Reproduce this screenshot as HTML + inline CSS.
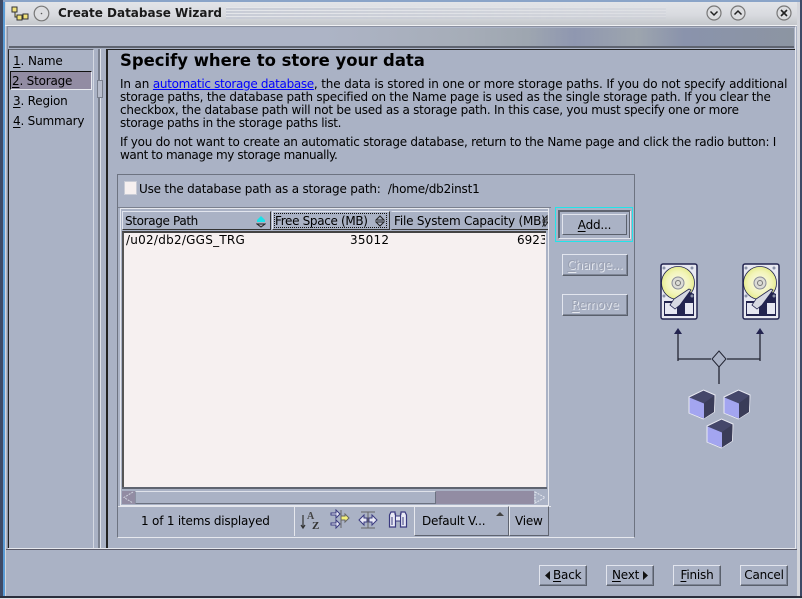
<!DOCTYPE html>
<html><head><meta charset="utf-8"><style>
html,body{margin:0;padding:0}
body{width:802px;height:599px;overflow:hidden;position:relative;background:#aab2c5;font:12px/13px "DejaVu Sans",sans-serif;color:#000;letter-spacing:-.2px}
.a{position:absolute;white-space:nowrap}
.r{position:absolute;box-sizing:border-box}
.btn{position:absolute;box-sizing:border-box;height:22px;border:1px solid;border-color:#e2e5ee #5a606c #5a606c #e2e5ee;box-shadow:inset -1px -1px 0 #7f8696;text-align:center;line-height:20px;font-size:12px}
.dis{color:#9aa1b3;text-shadow:1px 1px 0 #e4e7ee}
u{text-underline-offset:2px}
</style></head><body>

<!-- title bar -->
<div class="r" style="left:0;top:0;width:802px;height:25px;background:linear-gradient(#e4e6ea,#d8dadf 60%,#c4c7cc)"></div>
<div class="r" style="left:0;top:0;width:802px;height:2px;background:#8aa4c8"></div>
<div class="r" style="left:0;top:0;width:3px;height:599px;background:#3e4a66"></div>
<div class="r" style="left:3px;top:2px;width:2px;height:595px;background:#5a9bd5"></div>
<div class="r" style="left:5px;top:2px;width:1px;height:595px;background:#d4d6dc"></div>
<div class="r" style="left:797px;top:2px;width:3px;height:595px;background:#d4d6dc"></div>
<div class="r" style="left:800px;top:0;width:2px;height:599px;background:#3e4a66"></div>
<div class="r" style="left:5px;top:25px;width:792px;height:1px;background:#f0f1f4"></div>
<svg class="r" style="left:10px;top:4px" width="20" height="18" viewBox="0 0 20 18"><path d="M2 3h5v5h-5zM7 11h5v5h-5zM13 10h5v5h-5zM5 8v5h2" fill="#f1e27a" stroke="#333"/></svg>
<svg class="r" style="left:33px;top:5px" width="17" height="17"><circle cx="8.5" cy="8.5" r="7.3" fill="#dcdde0" stroke="#777" stroke-width="1.2"/><circle cx="8.5" cy="8.5" r=".8" fill="#555"/></svg>
<div class="a" style="left:58px;top:5px;font:bold 12px/16px 'DejaVu Sans',sans-serif;color:#1a1a1a;letter-spacing:0">Create Database Wizard</div>
<div class="r" style="left:226px;top:7px;width:440px;height:12px;background:repeating-linear-gradient(#e4e6ea 0 1px,#c8ccd6 1px 3px);-webkit-mask-image:linear-gradient(90deg,#000,rgba(0,0,0,.3))"></div>
<svg class="r" style="left:705px;top:4px" width="50" height="18"><g fill="#dcdde0" stroke="#777" stroke-width="1.2"><circle cx="9" cy="9" r="7"/><circle cx="33" cy="9" r="7"/></g><path d="M5.5 7.5L9 11l3.500-3.500M29.500 10.500L33 7l3.500 3.500" fill="none" stroke="#222" stroke-width="1.5"/></svg>
<svg class="r" style="left:775px;top:4px" width="18" height="18"><circle cx="9" cy="9" r="7" fill="#dcdde0" stroke="#777" stroke-width="1.2"/><path d="M6 6l6 6M12 6l-6 6" stroke="#222" stroke-width="1.6"/></svg>

<!-- banner -->
<div class="r" style="left:7px;top:26px;width:789px;height:523px;border:1px solid #8a90a0;border-right-color:#e6e8ee;border-bottom-color:#e6e8ee"></div>
<div class="r" style="left:6px;top:549px;width:791px;height:1px;background:#5a5a68"></div>
<div class="r" style="left:9px;top:28px;width:785px;height:19px;background:linear-gradient(90deg,#adb4c6 0,#adb4c6 40%,#a6adb8 58%,#9ea6b0 66%,#8f97b0 72%,#9da5ae 80%,#8a93ac 86%,#8c95a2 100%)"></div>
<div class="r" style="left:9px;top:46px;width:785px;height:2px;background:#5f6470"></div>

<!-- nav -->
<div class="r" style="left:8px;top:49px;width:86px;height:499px;border-left:1px solid #222;border-top:1px solid #5f6470;border-right:1px solid #d5d9e3"></div>
<div class="a" style="left:13px;top:54px;line-height:14px"><u>1</u>.</div><div class="a" style="left:28px;top:54px;line-height:14px">Name</div>
<div class="r" style="left:10px;top:71px;width:82px;height:19px;background:#928ca3;border:1px solid;border-color:#111 #e8eaf0 #e8eaf0 #111"></div>
<div class="a" style="left:12px;top:74px;line-height:14px"><u>2</u>. Storage</div>
<div class="a" style="left:13px;top:94px;line-height:14px"><u>3</u>. Region</div>
<div class="a" style="left:13px;top:114px;line-height:14px"><u>4</u>. Summary</div>

<!-- splitter -->
<div class="r" style="left:98px;top:49px;width:3px;height:499px;background:#7a808e;border-right:1px solid #dfe2ea"></div>
<div class="r" style="left:97px;top:80px;width:6px;height:18px;background:#b8bdcc;border:1px solid #7a808e"></div>
<div class="r" style="left:106px;top:49px;width:2px;height:499px;background:#222"></div>
<div class="r" style="left:106px;top:49px;width:689px;height:1px;background:#222"></div>

<!-- content text -->
<div class="a" style="left:120px;top:50px;font:bold 16.45px/22px 'DejaVu Sans',sans-serif;letter-spacing:0">Specify where to store your data</div>
<div class="a" style="left:120px;top:78px;letter-spacing:-.14px">In an <span style="color:#00f;text-decoration:underline;letter-spacing:-.33px">automatic storage database</span>, the data is stored in one or more storage paths. If you do not specify additional</div>
<div class="a" style="left:120px;top:91px;letter-spacing:-.25px">storage paths, the database path specified on the Name page is used as the single storage path. If you clear the</div>
<div class="a" style="left:120px;top:104px;letter-spacing:-.25px">checkbox, the database path will not be used as a storage path. In this case, you must specify one or more</div>
<div class="a" style="left:120px;top:117px;letter-spacing:-.3px">storage paths in the storage paths list.</div>
<div class="a" style="left:120px;top:136px;letter-spacing:-.26px">If you do not want to create an automatic storage database, return to the Name page and click the radio button: I</div>
<div class="a" style="left:120px;top:149px;letter-spacing:-.4px">want to manage my storage manually.</div>

<!-- group -->
<div class="r" style="left:117px;top:174px;width:518px;height:364px;border:1px solid;border-color:#6d7381 #6d7381 #e6e8ee #6d7381"></div>
<div class="r" style="left:124px;top:181px;width:13px;height:14px;background:#f6f0f0;border:1px solid #c9ccd6"></div>
<div class="a" style="left:139px;top:183px">Use the database path as a storage path: &nbsp;/home/db2inst1</div>

<!-- table -->
<div class="r" style="left:118px;top:207px;width:433px;height:1px;background:#7a808e"></div>
<div class="r" style="left:120px;top:208px;width:429px;height:298px;border:1px solid #e6e8ee"></div>
<div class="r" style="left:121px;top:209px;width:427px;height:23px;background:#aab2c5"></div>
<div class="r" style="left:122px;top:211px;width:149px;height:19px;border:1px solid;border-color:#e2e5ee #333 #333 #e2e5ee"></div>
<div class="a" style="left:125px;top:215px;letter-spacing:-.35px">Storage Path</div>
<svg class="r" style="left:256px;top:215px" width="10" height="13"><path d="M1 5L5 1l4 4z" fill="#1de0e8"/><rect x="1" y="5" width="8" height="2" fill="#1de0e8"/><path d="M1 9h8l-4 3z" fill="none" stroke="#222"/></svg>
<div class="r" style="left:272px;top:211px;width:118px;height:19px;border:1px solid;border-color:#e2e5ee #333 #333 #e2e5ee"></div>
<div class="r" style="left:274px;top:213px;width:113px;height:15px;border:1px dotted #111"></div>
<div class="a" style="left:275px;top:215px;letter-spacing:-.33px">Free Space (MB)</div>
<svg class="r" style="left:375px;top:215px" width="10" height="12"><path d="M1 5l4-4 4 4zM1 7h8l-4 4z" fill="none" stroke="#222"/></svg>
<div class="r" style="left:391px;top:211px;width:157px;height:19px;border:1px solid;border-color:#e2e5ee #333 #333 transparent;border-right:0"></div>
<div class="a" style="left:394px;top:215px">File System Capacity (MB)</div>
<svg class="r" style="left:542px;top:215px" width="6" height="12"><path d="M1 5l4-4v4zM1 7h5l-3 4z" fill="none" stroke="#222"/></svg>

<div class="r" style="left:122px;top:231px;width:424px;height:256px;background:#f6f0f0;border-top:2px solid #444;border-left:2px solid #555"></div>
<div class="a" style="left:126px;top:234px;letter-spacing:.25px">/u02/db2/GGS_TRG</div>
<div class="a" style="left:350px;top:234px;letter-spacing:.2px">35012</div>
<div class="a" style="left:517px;top:234px;width:28px;overflow:hidden;letter-spacing:0">6923</div>

<!-- scrollbar -->
<div class="r" style="left:122px;top:487px;width:425px;height:2px;background:#5f6470"></div>
<div class="r" style="left:122px;top:491px;width:425px;height:13px;background:#928ca3"></div>
<div class="r" style="left:135px;top:491px;width:301px;height:13px;background:#aab2c5;border:1px solid;border-color:#dfe2ea #6b7180 #6b7180 #8b92a3"></div>
<svg class="r" style="left:122px;top:491px" width="13" height="13"><rect width="13" height="13" fill="#928ca3"/><path d="M11 1L2 6.500 11 12" fill="none" stroke="#cfd3de" stroke-dasharray="2 1"/></svg>
<svg class="r" style="left:534px;top:491px" width="13" height="13"><rect width="13" height="13" fill="#aab2c5"/><path d="M1 1l10 5.500L1 12z" fill="none" stroke="#e2e5ee" stroke-dasharray="2 1"/></svg>

<!-- status bar -->
<div class="r" style="left:118px;top:506px;width:433px;height:1px;background:#e6e8ee"></div>
<div class="a" style="left:141px;top:515px">1 of 1 items displayed</div>
<div class="r" style="left:294px;top:506px;width:1px;height:30px;background:#e6e8ee"></div>
<svg class="r" style="left:300px;top:509px" width="22" height="22"><path d="M3 6v13M1 16l2 3 2-3" fill="none" stroke="#333" stroke-width="1.200"/><text x="7" y="10" font-family="Liberation Serif" font-weight="bold" font-size="10" fill="#444">A</text><text x="12" y="20" font-family="Liberation Serif" font-weight="bold" font-size="11" fill="#333">Z</text></svg>
<svg class="r" style="left:330px;top:509px" width="20" height="22"><path d="M1 4h5V1l4 4-4 4V6H1zM1 14h5v-3l4 4-4 4v-3H1z" fill="#e8e9f5" stroke="#3a3a80"/><path d="M11 1v18" stroke="#666"/><path d="M11 7h4V5l4 4-4 4v-2h-4z" fill="#f4f07a" stroke="#666"/></svg>
<svg class="r" style="left:358px;top:510px" width="20" height="20"><path d="M1 10l5-5v3h3v4H6v3zM19 10l-5-5v3h-3v4h3v3z" fill="#e8e9f5" stroke="#3a3a80"/><path d="M3 2h14M3 18h14" stroke="#666"/><path d="M10 2v16" stroke="#666"/></svg>
<svg class="r" style="left:388px;top:511px" width="20" height="18"><path d="M3 1h4v2h0.500v13H1.500V4zM17 1h-4v2h-.5v13h6V4z" fill="#e8e9f5" stroke="#3a3a80" stroke-width="1.200"/><path d="M7.500 5h5v5h-5z" fill="#e8e9f5" stroke="#3a3a80"/><path d="M4 6v8M15 6v8" stroke="#3a3a80"/></svg>
<div class="r" style="left:414px;top:506px;width:95px;height:30px;border:1px solid;border-color:#e6e8ee #5f6470 #5f6470 #e6e8ee"></div>
<div class="a" style="left:422px;top:515px">Default V...</div>
<svg class="r" style="left:496px;top:511px" width="9" height="6"><path d="M0 5l4-4 4 4z" fill="#444"/></svg>
<div class="r" style="left:509px;top:506px;width:40px;height:30px;border:1px solid;border-color:#e6e8ee #5f6470 #5f6470 #e6e8ee"></div>
<div class="a" style="left:515px;top:515px">View</div>

<!-- side buttons -->
<div class="r" style="left:555px;top:207px;width:78px;height:35px;border:1px solid #22e4ea"></div>
<div class="r" style="left:558px;top:210px;width:73px;height:29px;border:1px solid;border-color:#5f6470 #e2e5ee #e2e5ee #5f6470;box-shadow:inset 1px 1px 0 #5f6470,inset -1px 0 0 #5f6470"></div>
<div class="btn" style="left:562px;top:214px;width:65px;height:21px;line-height:20px;box-shadow:none"><u>A</u>dd...</div>
<div class="btn dis" style="left:562px;top:254px;width:66px"><u>C</u>hange...</div>
<div class="btn dis" style="left:562px;top:294px;width:66px"><u>R</u>emove</div>

<!-- illustration -->
<svg class="r" style="left:650px;top:255px" width="140" height="200" viewBox="0 0 140 200">
<defs><radialGradient id="pl"><stop offset="0" stop-color="#fafaf2"/><stop offset=".7" stop-color="#f2f4b8"/><stop offset="1" stop-color="#e6ec90"/></radialGradient>
<g id="d"><rect x="11" y="9" width="36" height="55" rx="2" fill="#e8e9f2" stroke="#232450" stroke-width="1.500"/>
<circle cx="28" cy="28" r="16.500" fill="url(#pl)" stroke="#232450" stroke-width=".8"/>
<path d="M14 46h5l5 0 8-7 6-3 6 3v22H14z" fill="#232450"/>
<path d="M15 48h8l4 4v7H15z" fill="#e6e7f2"/><rect x="35" y="48" width="8" height="11" fill="#e6e7f2"/>
<path d="M20 50l4-6 15-10 2 1-11 15-5 4z" fill="#d6d8e2" stroke="#232450" stroke-width=".8"/>
<circle cx="28" cy="28" r="6" fill="#dcdcd6" stroke="#8a8c98"/><circle cx="28" cy="28" r="2.500" fill="none" stroke="#777"/>
<g fill="#8a92a8"><circle cx="14" cy="13" r="1.500"/><circle cx="42" cy="13" r="1.500"/><circle cx="14" cy="41" r="1.500"/><circle cx="42" cy="41" r="1.500"/></g></g></defs>
<use href="#d"/><use href="#d" x="82"/>
<path d="M28 106V78M110 106V78M28 104h33M77 104h33M69 112v17" fill="none" stroke="#232533" stroke-width="1.300"/>
<path d="M28 73l-4 6h8zM110 73l-4 6h8z" fill="#232450"/>
<path d="M69 96l7 8-7 8-7-8z" fill="#aab2c5" stroke="#232533"/>
<g id="c"><path d="M39 142l14.500-7 11.500 5-.7 17-11 7-14.300-6z" fill="#45476a" stroke="#e8e9f2"/><path d="M39.500 142.500l14.500 6v15l-14.500-5.500z" fill="#a3a5f0"/><path d="M54 148l10.500-7.500-.5 16.500-10 6.500z" fill="#3a3c58"/></g>
<use href="#c" x="35"/><use href="#c" x="18" y="29"/>
</svg>

<!-- bottom -->
<div class="btn" style="left:539px;top:565px;width:48px;height:21px;line-height:19px;text-align:left;padding-left:13px"><svg class="r" style="left:5px;top:5px" width="6" height="9"><path d="M5 0v9L0 4.500z" fill="#111"/></svg><u>B</u>ack</div>
<div class="btn" style="left:606px;top:565px;width:48px;height:21px;line-height:19px;text-align:left;padding-left:5px"><u>N</u>ext<svg class="r" style="left:36px;top:5px" width="6" height="9"><path d="M0 0v9l5-4.500z" fill="#111"/></svg></div>
<div class="btn" style="left:673px;top:565px;width:48px;height:21px;line-height:19px"><u>F</u>inish</div>
<div class="btn" style="left:740px;top:565px;width:48px;height:21px;line-height:19px">Cancel</div>
<div class="r" style="left:0;top:596px;width:802px;height:2px;background:#2a2e3c"></div>
<div class="r" style="left:0;top:598px;width:802px;height:1px;background:#e0e0e4"></div>
</body></html>
